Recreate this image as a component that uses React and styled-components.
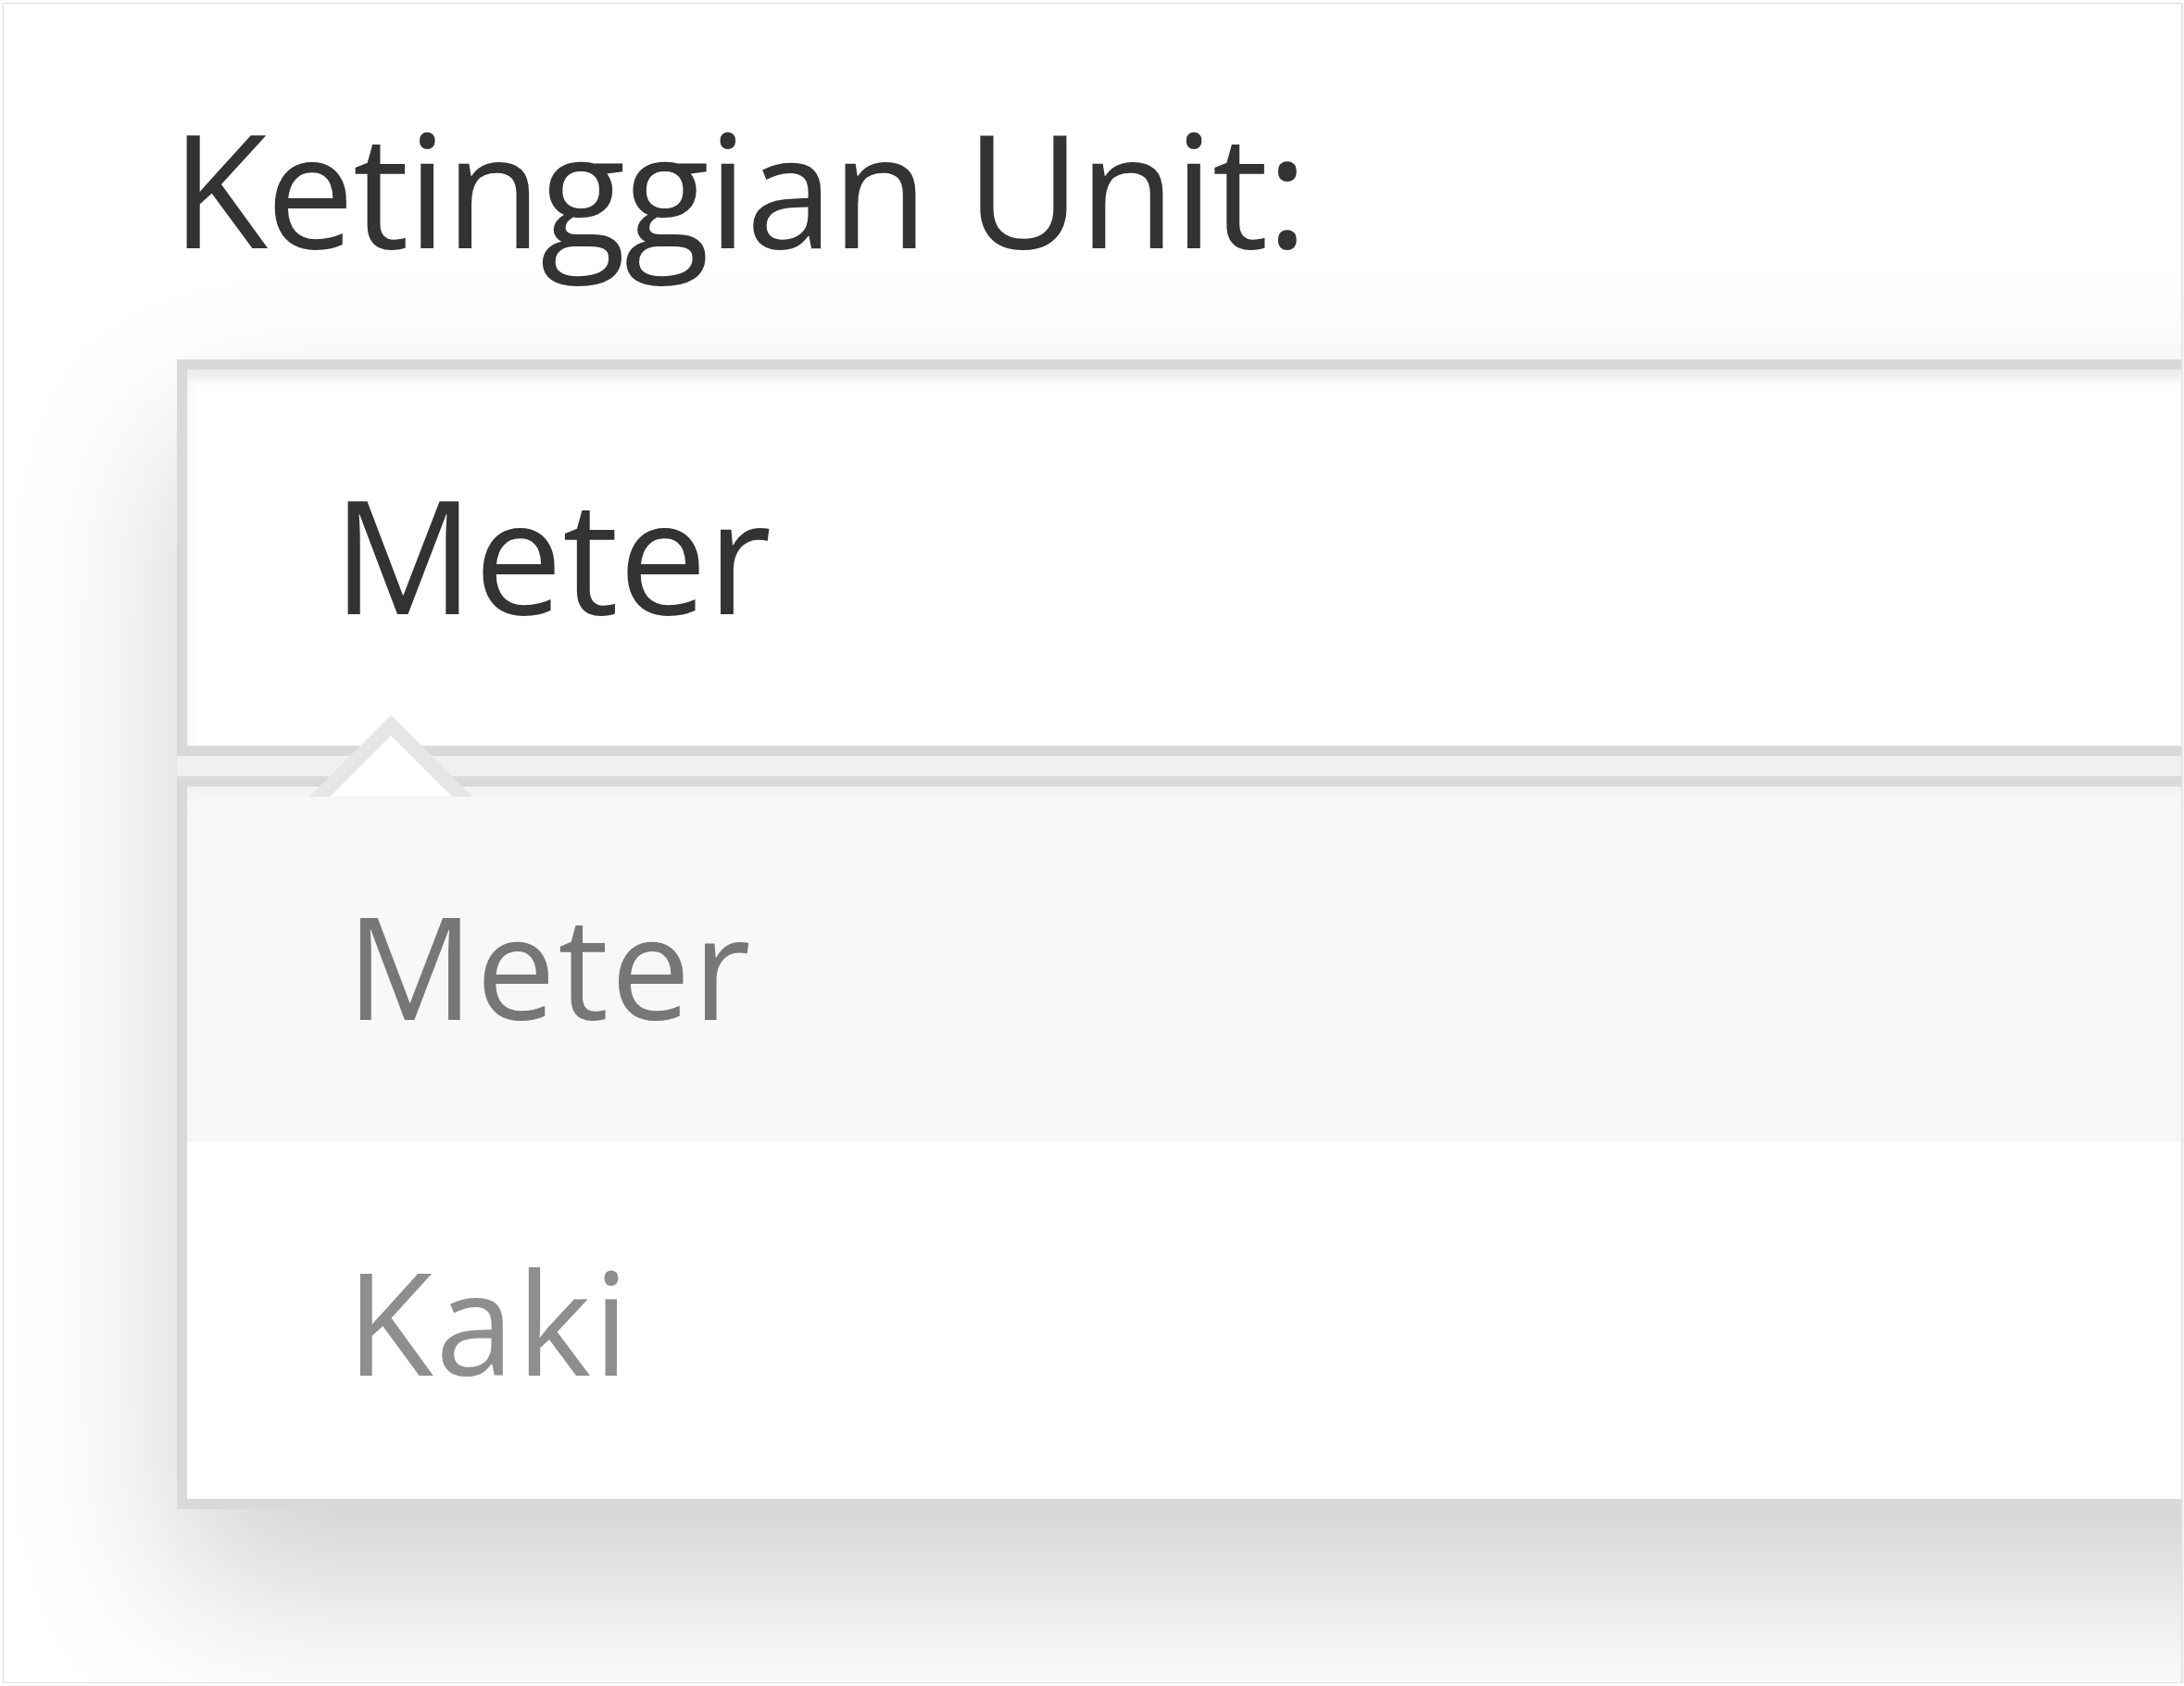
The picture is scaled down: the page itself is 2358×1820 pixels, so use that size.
import React from "react";
import styled, { createGlobalStyle } from "styled-components";

const Global = createGlobalStyle`
  html, body { margin: 0; padding: 0; background: #ffffff; }
  body { font-family: "Open Sans", "Noto Sans", sans-serif; }
  * { box-sizing: border-box; }
`;

const Frame = styled.div`
  margin: 3px 0 0 3px;
  width: 2353px;
  height: 1814px;
  border: 1px solid #e0e0e0;
  box-shadow: 1px 1px 3px rgba(0, 0, 0, 0.12);
  background: #ffffff;
  overflow: hidden;
  display: flex;
  flex-direction: column;
`;

const Label = styled.label`
  display: block;
  margin: 113px 0 0 0;
  padding-left: 181px;
  font-size: 170px;
  line-height: 170px;
  letter-spacing: -1.8px;
  color: #333333;
  white-space: nowrap;
`;

const Field = styled.div`
  margin: 101px 0 0 187px;
  width: 2600px;
  flex: none;
  display: flex;
  flex-direction: column;
  background: #f0f0f0;
  box-shadow: 0 85px 170px rgba(0, 0, 0, 0.19);
`;

const SelectBox = styled.div`
  height: 428px;
  border: 11px solid #d9d9d9;
  background: #ffffff;
  box-shadow: inset 0 11px 11px rgba(0, 0, 0, 0.075);
  display: flex;
  align-items: center;
  padding: 0 0 10px 157px;
  font-size: 170px;
  line-height: 170px;
  color: #333333;
`;

const Menu = styled.ul`
  position: relative;
  list-style: none;
  margin: 22px 0 0 0;
  padding: 0;
  border: 11px solid #d9d9d9;
  background: #ffffff;
`;

const Caret = styled.svg`
  position: absolute;
  top: -77px;
  left: 132px;
  width: 176px;
  height: 88px;
  display: block;
`;

const Item = styled.li`
  height: ${(p) => p.$h}px;
  display: flex;
  align-items: center;
  padding-left: 172px;
  font-size: 153px;
  line-height: 153px;
  letter-spacing: 2.5px;
  color: ${(p) => (p.$active ? "#777777" : "#8e8e8e")};
  background: ${(p) => (p.$active ? "#f8f8f8" : "#ffffff")};
  box-shadow: ${(p) =>
    p.$active ? "inset 0 12px 24px -12px rgba(0,0,0,0.06)" : "none"};
`;

export default function App() {
  return (
    <>
      <Global />
      <Frame>
        <Label>Ketinggian Unit:</Label>
        <Field>
          <SelectBox>Meter</SelectBox>
          <Menu>
            <Caret viewBox="0 0 176 88" aria-hidden="true">
              <polygon points="0,88 88,0 176,88" fill="#e6e6e6" />
              <polygon points="22,88 88,22 154,88" fill="#ffffff" />
            </Caret>
            <Item $active $h={384}>Meter</Item>
            <Item $h={385}>Kaki</Item>
          </Menu>
        </Field>
      </Frame>
    </>
  );
}
